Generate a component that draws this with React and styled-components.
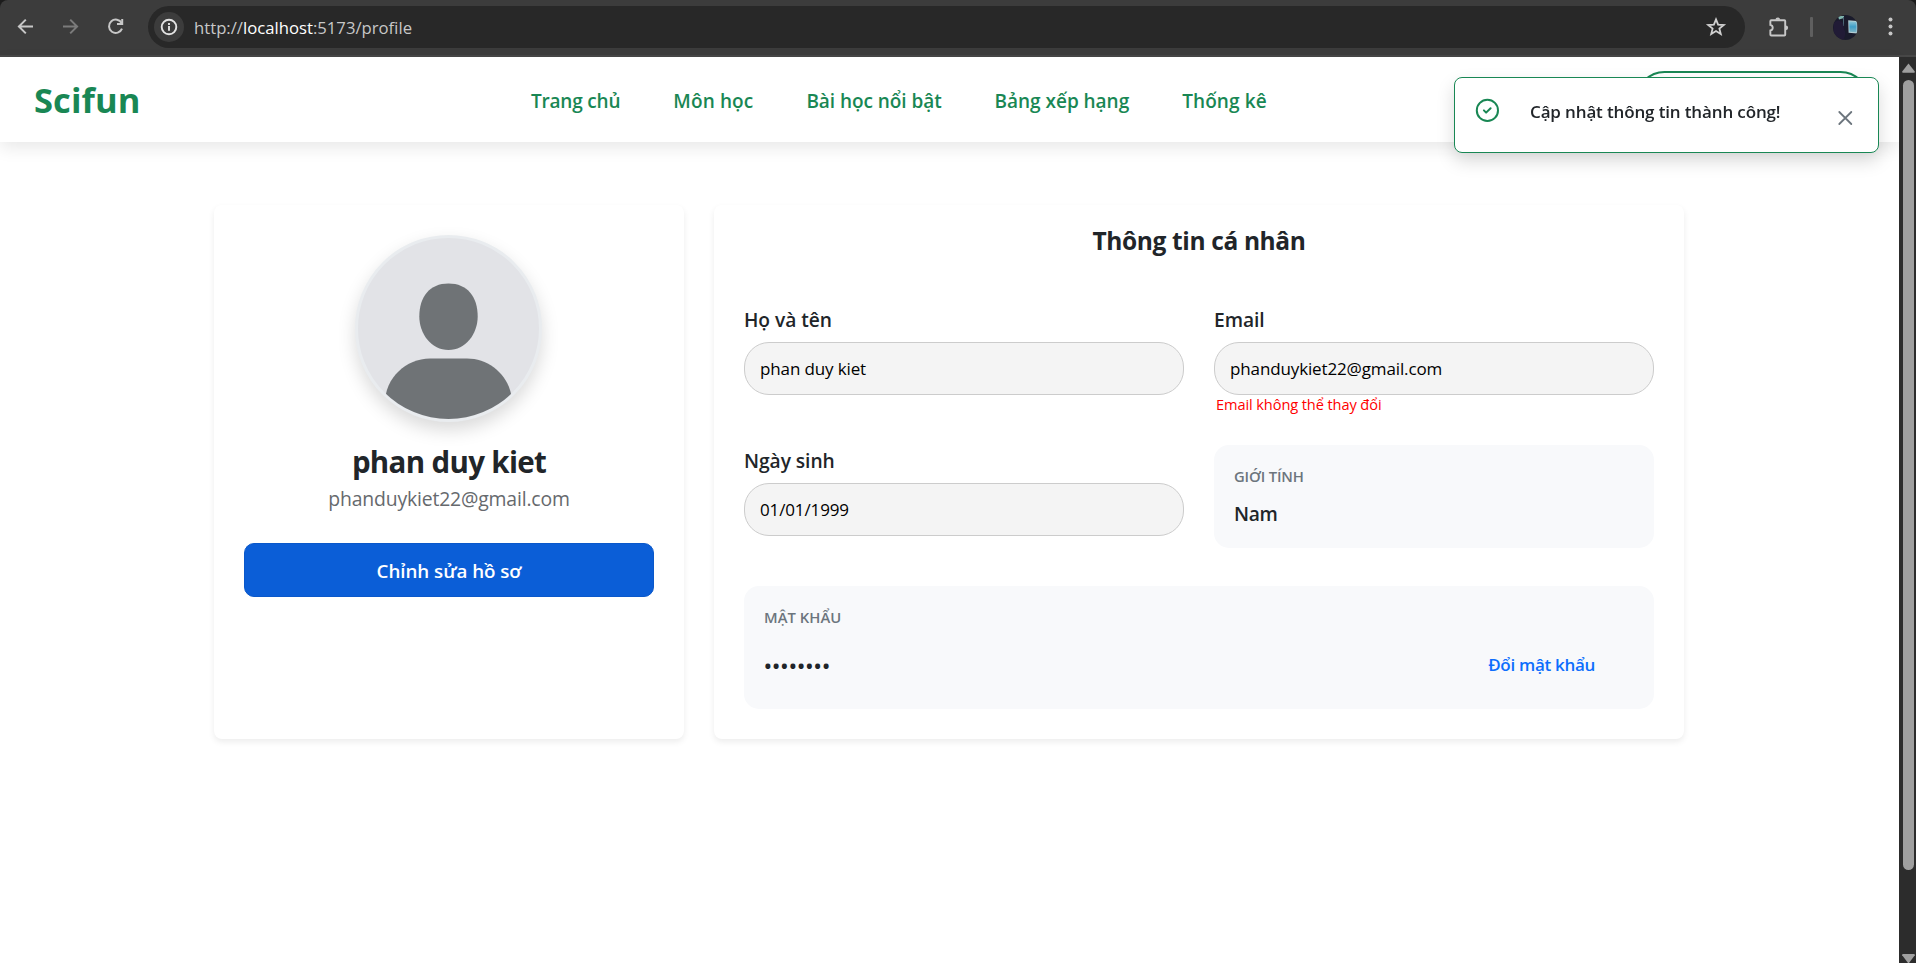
import React from "react";
import styled, { createGlobalStyle } from "styled-components";

const GlobalStyle = createGlobalStyle`
  * { box-sizing: border-box; }
  html, body { margin: 0; height: 100%; overflow: hidden; background: #fff; }
  body { font-family: "Open Sans", "Noto Sans", sans-serif; color: #212529; }
  button { font-family: inherit; margin: 0; }
`;

const Window = styled.div`
  width: 100%;
  height: 963px;
  display: flex;
  flex-direction: column;
  background: #1c1c1c;
  overflow: hidden;
`;

/* Browser toolbar */

const Toolbar = styled.div`
  flex: none;
  height: 57px;
  display: flex;
  align-items: flex-start;
  padding: 6px 16px 0 11px;
  background: #3c3c3c;
  border-bottom: 2px solid #474747;
  border-radius: 8px 8px 0 0;
`;

const ToolButton = styled.button`
  width: ${(p) => p.$width || 45}px;
  height: 42px;
  display: flex;
  align-items: center;
  justify-content: flex-start;
  padding: 0 0 0 ${(p) => p.$inset || 0}px;
  border: 0;
  background: none;
  color: ${(p) => (p.$dim ? "#7b7b7b" : "#c7c7c7")};
`;

const AddressBar = styled.div`
  flex: 1;
  height: 42px;
  display: flex;
  align-items: center;
  margin-left: 2px;
  padding: 0 18px 0 6px;
  border-radius: 21px;
  background: #282828;
`;

const SiteInfo = styled.span`
  width: 30px;
  height: 30px;
  display: grid;
  place-items: center;
  border-radius: 50%;
  background: #3c3c3c;
  color: #e3e3e3;
`;

const Url = styled.span`
  flex: 1;
  margin-left: 10px;
  padding-top: 1px;
  font-size: 16.7px;
  line-height: 24px;
  color: #c7c7c7;
`;

const UrlHost = styled.span`
  color: #fff;
`;

const Divider = styled.span`
  width: 3px;
  height: 20px;
  margin: 11px 20px 0 20px;
  background: #5f5f5f;
  border-radius: 1px;
`;

/* Page frame */

const Viewport = styled.div`
  flex: 1;
  min-height: 0;
  display: flex;
`;

const Page = styled.div`
  flex: 1;
  min-width: 0;
  display: flex;
  flex-direction: column;
  background: #fff;
`;

const ScrollTrack = styled.div`
  width: 17px;
  display: flex;
  flex-direction: column;
  align-items: center;
  padding: 6px 0 0 1px;
  background: #2c2c2c;
`;

const ScrollThumb = styled.div`
  width: 11px;
  height: 790px;
  margin: 7px 0 auto;
  border-radius: 6px;
  background: #9f9f9f;
`;

/* Site header */

const Header = styled.header`
  flex: none;
  height: 85px;
  display: flex;
  align-items: center;
  padding: 0 30px 0 34px;
  background: #fff;
  box-shadow: 0 6px 16px rgba(0, 0, 0, 0.09);
`;

const Logo = styled.div`
  width: 497px;
  font-size: 34.5px;
  font-weight: 700;
  line-height: 48px;
  letter-spacing: 0.1px;
  color: #198754;
`;

const Nav = styled.nav`
  display: flex;
  gap: 53px;
  padding-top: 3px;
`;

const NavLink = styled.a`
  font-size: 19px;
  font-weight: 600;
  line-height: 28px;
  letter-spacing: ${(p) => p.$track}px;
  white-space: nowrap;
  color: #198754;
`;

const AccountButton = styled.button`
  width: 233px;
  height: 57px;
  margin-left: auto;
  border: 2px solid #198754;
  border-radius: 29px;
  background: #fff;
`;

/* Profile content */

const Main = styled.main`
  display: flex;
  gap: 30px;
  padding: 63px 215px 0 214px;
`;

const Card = styled.section`
  width: ${(p) => p.$width}px;
  height: 534px;
  display: flex;
  flex-direction: column;
  padding: ${(p) => p.$top}px 30px 0;
  border-radius: 8px;
  background: #fff;
  box-shadow: 0 3px 6px rgba(0, 0, 0, 0.075);
`;

const Avatar = styled.div`
  width: 187px;
  height: 187px;
  align-self: center;
  margin-right: 2px;
  border: 3px solid #e9ecef;
  border-radius: 50%;
  overflow: hidden;
  background: #e2e3e7;
  box-shadow: 0 8px 18px rgba(0, 0, 0, 0.15);

  svg { display: block; width: 100%; height: 100%; }
`;

const ProfileName = styled.h2`
  margin: 22px 0 0;
  font-size: 29.5px;
  font-weight: 700;
  line-height: 35px;
  letter-spacing: -0.67px;
  text-align: center;
`;

const ProfileEmail = styled.p`
  margin: 6px 0 30px;
  font-size: 19.4px;
  line-height: 28px;
  letter-spacing: -0.17px;
  text-align: center;
  color: #66696d;
`;

const EditButton = styled.button`
  height: 54px;
  padding: 1px 0 0;
  border: 1px solid #0a58ca;
  border-radius: 10px;
  background: #0b5ed7;
  font-size: 18.8px;
  font-weight: 600;
  letter-spacing: -0.05px;
  color: #fff;
`;

const CardTitle = styled.h3`
  margin: 0 0 48px;
  font-size: 24.5px;
  font-weight: 700;
  line-height: 30px;
  letter-spacing: -0.36px;
  text-align: center;
`;

const FieldGrid = styled.div`
  display: grid;
  grid-template-columns: 440px 440px;
  grid-template-rows: 141px 141px 123px;
  column-gap: 30px;
`;

const Field = styled.div`
  display: flex;
  flex-direction: column;
  padding-top: 3px;
`;

const Label = styled.label`
  margin-bottom: 10px;
  font-size: 19.2px;
  font-weight: 600;
  line-height: 25px;
  letter-spacing: -0.05px;
`;

const ReadOnlyInput = styled.div`
  height: 53px;
  padding: 1px 15px 0 15px;
  border: 1px solid #ccc;
  border-radius: 25px;
  background: #f4f4f4;
  font-size: 17px;
  line-height: 50px;
  letter-spacing: -0.13px;
  color: #000;
`;

const Hint = styled.small`
  padding: 1px 0 0 2px;
  font-size: 14.6px;
  line-height: 17px;
  letter-spacing: -0.1px;
  color: #f00;
`;

const InfoBox = styled.div`
  grid-column: ${(p) => (p.$wide ? "1 / -1" : "auto")};
  height: ${(p) => (p.$wide ? 123 : 103)}px;
  padding: 22px 20px 0;
  border-radius: 15px;
  background: #f8f9fb;
`;

const Caption = styled.div`
  font-size: 14.8px;
  font-weight: 600;
  line-height: 18px;
  letter-spacing: ${(p) => p.$track}px;
  color: #6c757d;
`;

const Value = styled.div`
  margin-top: 17px;
  font-size: 19.2px;
  font-weight: 600;
  line-height: 24px;
  letter-spacing: -0.3px;
`;

const PasswordRow = styled.div`
  height: 44px;
  display: flex;
  align-items: center;
  justify-content: space-between;
  margin-top: 16px;
  padding-right: 39px;
`;

const PasswordDots = styled.span`
  padding-top: 3px;
  font-size: 20.5px;
  font-weight: 600;
  line-height: 24px;
  letter-spacing: 0.6px;
`;

const TextButton = styled.button`
  padding: 2px 0 0;
  border: 0;
  background: none;
  font-size: 17px;
  font-weight: 600;
  line-height: 24px;
  letter-spacing: -0.3px;
  color: #0d6efd;
`;

/* Notification shown over the page */

const Toast = styled.div`
  position: fixed;
  top: 77px;
  right: 37px;
  width: 425px;
  height: 76px;
  display: flex;
  align-items: flex-start;
  padding: 20px 25px 0 20px;
  border: 1px solid #198754;
  border-radius: 8px;
  background: #fff;
  box-shadow: 0 8px 18px rgba(0, 0, 0, 0.15);
`;

const ToastText = styled.span`
  flex: 1;
  margin-left: 31px;
  font-size: 17px;
  font-weight: 600;
  line-height: 27px;
  letter-spacing: -0.14px;
`;

const ToastClose = styled.button`
  width: 16px;
  height: 16px;
  padding: 0;
  margin-top: 12px;
  border: 0;
  background: none;
  color: #6c757d;

  svg { display: block; }
`;

const BackIcon = () => (
  <svg width="20" height="20" viewBox="0 0 20 20" fill="none" stroke="currentColor" strokeWidth="2">
    <path d="M17 9.5H3M9.8 2.6 2.9 9.5l6.9 6.9" />
  </svg>
);

const ForwardIcon = () => (
  <svg width="20" height="20" viewBox="0 0 20 20" fill="none" stroke="currentColor" strokeWidth="2">
    <path d="M2 9.5h14M9.2 2.6l6.9 6.9-6.9 6.9" />
  </svg>
);

const ReloadIcon = () => (
  <svg width="20" height="20" viewBox="0 0 20 20" fill="none" stroke="currentColor" strokeWidth="2">
    <path d="M15.7 6.2A6.7 6.7 0 1 0 16 11.6" />
    <path d="M16.2 1.9v5.2H11" />
  </svg>
);

const InfoIcon = () => (
  <svg width="18" height="18" viewBox="0 0 18 18" fill="none" stroke="currentColor" strokeWidth="1.9">
    <circle cx="9" cy="9" r="7.3" />
    <path d="M9 8.1v4.7M9 5v1.9" />
  </svg>
);

const StarIcon = () => (
  <svg width="22" height="22" viewBox="0 0 22 22" fill="none" stroke="#d0d0d0" strokeWidth="1.8">
    <path d="m11 3.4 2.1 5.2 5.7.4-4.4 3.6 1.4 5.5-4.8-3-4.8 3 1.4-5.5L3.2 9l5.7-.4z" />
  </svg>
);

const PuzzleIcon = () => (
  <svg width="24" height="24" viewBox="0 0 24 24" fill="none" stroke="currentColor" strokeWidth="2">
    <path d="M4.400 5h13.800q.8 0 .8.8V20q0 .9-.9.9H4.500q-1 0-1-1v-4.200c3.300-.8 3.300-5.100 0-5.900V6q0-1 .9-1z" />
    <path d="M8.800 4.500a2.400 2.400 0 0 1 5 0zM19.600 10.400a2.300 2.300 0 0 1 0 4.900z" fill="currentColor" stroke="none" />
  </svg>
);

const UserPhoto = () => (
  <svg width="25" height="25" viewBox="0 0 25 25">
    <defs>
      <clipPath id="photoClip"><circle cx="12.5" cy="12.5" r="12.5" /></clipPath>
      <linearGradient id="screenFill" x1="0" y1="0" x2="0" y2="1">
        <stop offset="0" stopColor="#8ec6d6" />
        <stop offset="0.5" stopColor="#3f9fc9" />
        <stop offset="1" stopColor="#7fb4c4" />
      </linearGradient>
    </defs>
    <g clipPath="url(#photoClip)">
      <rect width="25" height="25" fill="#1a1b2c" />
      <path d="M5 1h6v2l-5 1.500z" fill="#7fb5ad" />
      <path d="M10 2h1v9h-1z" fill="#4b6675" />
      <path d="M1 8q4-5 9 0l1 6q3 5-1 11H0z" fill="#211b36" />
      <path d="M15.200 5.200 24.400 6v12.600l-8.800-.8z" fill="#b3cdd2" />
      <path d="M16.200 6.300 23.500 7v10.300l-7-.6z" fill="url(#screenFill)" />
    </g>
  </svg>
);

const MenuIcon = () => (
  <svg width="6" height="20" viewBox="0 0 6 20" fill="currentColor">
    <circle cx="2.500" cy="2.500" r="2" />
    <circle cx="2.500" cy="9.500" r="2" />
    <circle cx="2.500" cy="16.500" r="2" />
  </svg>
);

const UpArrow = () => (
  <svg width="13" height="10" viewBox="0 0 13 10">
    <path d="M6.5.4 12.8 8.4q.2 1.4-.8 1.4H1q-1 0-.8-1.4z" fill="#9f9f9f" />
  </svg>
);

const DownArrow = () => (
  <svg width="13" height="9" viewBox="0 0 13 9">
    <path d="M1 0h11q1 0 .8 1.2L7 9H6L.2 1.2Q0 0 1 0z" fill="#9f9f9f" />
  </svg>
);

const PersonPicture = () => (
  <svg viewBox="0 0 181 181">
    <path d="M90.5 45.5c19 0 29.2 13.4 29.2 33 0 17.500-12.200 33.500-29.200 33.500S61.300 96 61.300 78.500c0-19.600 10.200-33 29.200-33z" fill="#6f7376" />
    <path d="M27 165c0-25 21-44.500 45-44.500h37c24 0 45 19.500 45 44.500v20H27z" fill="#6f7376" />
  </svg>
);

const CheckCircle = () => (
  <svg width="24" height="24" viewBox="0 0 24 24" fill="none" stroke="#198754" strokeWidth="2">
    <circle cx="12.4" cy="12.4" r="10.6" />
    <path d="m8.900 12.400 2.200 2.200 4.500-4.400" strokeLinecap="round" strokeLinejoin="round" />
  </svg>
);

const CloseIcon = () => (
  <svg width="16" height="16" viewBox="0 0 16 16" fill="none" stroke="currentColor" strokeWidth="1.8" strokeLinecap="round">
    <path d="m2.300 2 12 12M14.300 2l-12 12" />
  </svg>
);

const NAV_ITEMS = [
  { text: "Trang chủ", track: -0.2 },
  { text: "Môn học", track: 0.13 },
  { text: "Bài học nổi bật", track: -0.06 },
  { text: "Bảng xếp hạng", track: -0.03 },
  { text: "Thống kê", track: 0.1 },
];

function BrowserToolbar() {
  return (
    <Toolbar>
      <ToolButton $inset={5}><BackIcon /></ToolButton>
      <ToolButton $inset={5} $dim><ForwardIcon /></ToolButton>
      <ToolButton $inset={5}><ReloadIcon /></ToolButton>
      <AddressBar>
        <SiteInfo><InfoIcon /></SiteInfo>
        <Url>http://<UrlHost>localhost</UrlHost>:5173/profile</Url>
        <StarIcon />
      </AddressBar>
      <ToolButton $width={45} $inset={22}><PuzzleIcon /></ToolButton>
      <Divider />
      <ToolButton $width={55}><UserPhoto /></ToolButton>
      <ToolButton $width={12}><MenuIcon /></ToolButton>
    </Toolbar>
  );
}

function ProfileCard() {
  return (
    <Card $width={470} $top={30}>
      <Avatar><PersonPicture /></Avatar>
      <ProfileName>phan duy kiet</ProfileName>
      <ProfileEmail>phanduykiet22@gmail.com</ProfileEmail>
      <EditButton>Chỉnh sửa hồ sơ</EditButton>
    </Card>
  );
}

function DetailsCard() {
  return (
    <Card $width={970} $top={21}>
      <CardTitle>Thông tin cá nhân</CardTitle>
      <FieldGrid>
        <Field>
          <Label>Họ và tên</Label>
          <ReadOnlyInput>phan duy kiet</ReadOnlyInput>
        </Field>
        <Field>
          <Label>Email</Label>
          <ReadOnlyInput>phanduykiet22@gmail.com</ReadOnlyInput>
          <Hint>Email không thể thay đổi</Hint>
        </Field>
        <Field>
          <Label>Ngày sinh</Label>
          <ReadOnlyInput>01/01/1999</ReadOnlyInput>
        </Field>
        <InfoBox>
          <Caption $track={-0.15}>GIỚI TÍNH</Caption>
          <Value>Nam</Value>
        </InfoBox>
        <InfoBox $wide>
          <Caption $track={0.05}>MẬT KHẨU</Caption>
          <PasswordRow>
            <PasswordDots>••••••••</PasswordDots>
            <TextButton>Đổi mật khẩu</TextButton>
          </PasswordRow>
        </InfoBox>
      </FieldGrid>
    </Card>
  );
}

export default function App() {
  return (
    <>
      <GlobalStyle />
      <Window>
        <BrowserToolbar />
        <Viewport>
          <Page>
            <Header>
              <Logo>Scifun</Logo>
              <Nav>
                {NAV_ITEMS.map((item) => (
                  <NavLink key={item.text} $track={item.track}>{item.text}</NavLink>
                ))}
              </Nav>
              <AccountButton aria-label="Account" />
            </Header>
            <Main>
              <ProfileCard />
              <DetailsCard />
            </Main>
          </Page>
          <ScrollTrack>
            <UpArrow />
            <ScrollThumb />
            <DownArrow />
          </ScrollTrack>
        </Viewport>
        <Toast role="status">
          <CheckCircle />
          <ToastText>Cập nhật thông tin thành công!</ToastText>
          <ToastClose aria-label="Close"><CloseIcon /></ToastClose>
        </Toast>
      </Window>
    </>
  );
}
